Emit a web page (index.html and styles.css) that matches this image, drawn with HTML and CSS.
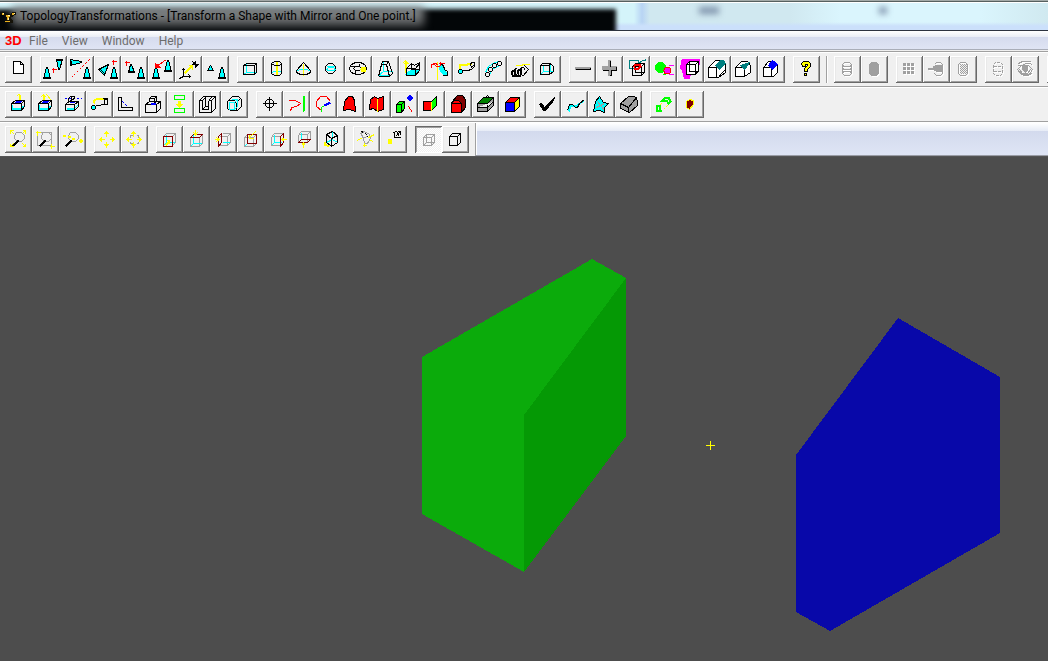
FILE: index.html
```html
<!DOCTYPE html>
<html lang="en">
<head>
<meta charset="utf-8">
<title>TopologyTransformations</title>
<link rel="stylesheet" href="styles.css">
</head>
<body>
<div class="window">
<header class="title-bar">
  <div class="glass" aria-hidden="true"><i class="dark"></i><i class="glow"></i><i class="smudge one"></i><i class="smudge two"></i></div>
  <svg class="app-icon" viewBox="0 0 16 16"><path d="M1 4h4l1 2h5l1-2h4v3h-2l-1 2h-2v2l2 2v2h-8v-2l2-2v-2h-2l-2-2h-3z" fill="#151208"/><path d="M2 5h2v2h-2zM12 5h2v2h-2zM6 7h4v2h-4zM7 9h2v3h-2zM5 13h5v1h-5z" fill="#e8b020"/><path d="M3 5h1v1h-1zM8 7h2v1h-2zM8 10h1v2h-1zM14 5h1v1h-1z" fill="#fff6b0"/></svg>
  <h1>TopologyTransformations - [Transform a Shape with Mirror and One point.]</h1>
</header>
<nav class="menu-bar">
  <span class="logo">3D</span>
  <button>File</button><button>View</button><button>Window</button><button>Help</button>
</nav>
<div class="tool-row">
  <div class="group">
    <button class="tool" aria-label="New"><svg viewBox="-.5 -.5 27 27"><path class="k fw" d="M8 5h7l3 3v9h-10zM15 5v3h3"/></svg></button>
  </div>
  <div class="group">
    <button class="tool" aria-label="Mirror about point"><svg viewBox="-.5 -.5 27 27"><path class="k fc" d="M6 11h1l3 11h-7zM16 3h6l-3 10h-1zM3 21h7M16 4h6"/><path class="r" d="M11 13h5M13 11v5"/></svg></button>
    <button class="tool" aria-label="Mirror about axis"><svg viewBox="-.5 -.5 27 27"><path class="k fc" d="M3 3v6l11-3v-1zM4 4v5M19 11h1l3 11h-7zM16 21h7"/><path class="r dot" d="M22 3L4 21"/></svg></button>
    <button class="tool" aria-label="Rotate"><svg viewBox="-.5 -.5 27 27"><path class="k fc" d="M14 8l-10 5 6 6zM19 11h1l3 11h-7zM5 12l6 6M16 21h7"/><path class="r" d="M17 5h5M19 3v5"/></svg></button>
    <button class="tool" aria-label="Scale"><svg viewBox="-.5 -.5 27 27"><path class="k fc" d="M9 8h1l3 8h-6zM19 11h1l3 11h-7zM7 15h6M16 21h7"/><path class="r" d="M3 6h5M5 4v5"/></svg></button>
    <button class="tool" aria-label="Translate"><svg viewBox="-.5 -.5 27 27"><path class="k fc" d="M7 11h1l3 11h-7zM19 4h1l3 11h-7zM4 21h7M16 14h7"/><path class="r fr" d="M18 3L8 10M7 7v4h5z"/></svg></button>
    <button class="tool" aria-label="Displacement"><svg viewBox="-.5 -.5 27 27"><path class="k" d="M8 12v8h7M8 20l-4 2M13 18l2 2-2 2M6 14l2-2 2 2M16 8h7M20 4v7M17 5l5 5M17 8l3-3M20 11l3-3"/><path class="y thick" d="M9 17l8-8"/><path class="y" d="M13 9h4v4"/></svg></button>
    <button class="tool" aria-label="Deform"><svg viewBox="-.5 -.5 27 27"><path class="k fc" d="M8 9l3 5h-6zM19 11h1l3 11h-7zM16 21h7"/></svg></button>
  </div>
  <div class="group">
    <button class="tool" aria-label="Box"><svg viewBox="-.5 -.5 27 27"><path class="c" d="M9 7v9h9M9 16l-3 2"/><path class="k" d="M6 9h11v9h-11zM6 9l3-2h10l-2 2M19 7v9l-2 2"/></svg></button>
    <button class="tool" aria-label="Cylinder"><svg viewBox="-.5 -.5 27 27"><path class="c" d="M7 16l3-1h5l3 1"/><path class="y" d="M12 5v14M13 5v14"/><path class="k" d="M7 7l3-2h5l2 2-2 2h-5l-3-2v10l3 2h5l2-2v-10"/></svg></button>
    <button class="tool" aria-label="Cone"><svg viewBox="-.5 -.5 27 27"><path class="c" d="M5 15l3-2h8l3 2"/><path class="y" d="M12 7v12"/><path class="k" d="M12 6l-7 8v2l4 2h6l4-2v-2z"/></svg></button>
    <button class="tool" aria-label="Sphere"><svg viewBox="-.5 -.5 27 27"><path class="k" d="M10 7h4l3 3v4l-3 3h-4l-3-3v-4z"/><path class="c" d="M8 13l2-2h5l2 2-2 1h-5zM8 10h8"/></svg></button>
    <button class="tool" aria-label="Torus"><svg viewBox="-.5 -.5 27 27"><ellipse class="k" cx="12.5" cy="12" rx="8.500" ry="6"/><path class="k" d="M8 12l2-2h4l2 2-2 2h-4zM5 10h4M10 14v4M14 7v3"/><circle class="fy" cx="18" cy="13" r="3"/></svg></button>
    <button class="tool" aria-label="Wedge"><svg viewBox="-.5 -.5 27 27"><path class="c" d="M11 5v10l-5 4M11 15h9M6 19h11"/><path class="k" d="M10 5h6l4 12-3 3-3-12h-5l-3 12M6 20h11M9 8l1-3M16 5l-2 3"/></svg></button>
    <button class="tool" aria-label="Prism"><svg viewBox="-.5 -.5 27 27"><path class="c fc" d="M6 18l5-4h9l-4 5h-9z"/><path class="y thick" d="M6 4v12"/><path class="y" d="M3 7l3-3 3 3M4 7h5"/><path class="k" d="M7 12h9v7h-9zM7 12l5-5M12 7v6h8M12 7l3 2 5-3v8l-4 5M16 12l4-5"/></svg></button>
    <button class="tool" aria-label="Revolve"><svg viewBox="-.5 -.5 27 27"><path class="k" d="M15 8l2 1 1 4 3 2v4h-5"/><path class="c fc" d="M13 9h2l2 4 3 3v2h-3l-4-5z"/><path class="y" d="M11 5v18"/><path class="r" d="M5 11v-3h3l2 2h3l2-3h3M6 8l2-1h2l1 2M13 8l1-2"/></svg></button>
    <button class="tool" aria-label="Pipe"><svg viewBox="-.5 -.5 27 27"><path class="y thick" d="M6 12v-3l3-1h5l4-1"/><path class="k" d="M9 14h5l4-1 3-3v-4h-3l-1 2 1 3 2-2"/><circle class="k fc" cx="7" cy="15" r="2"/></svg></button>
    <button class="tool" aria-label="Through sections"><svg viewBox="-.5 -.5 27 27"><path class="c" d="M5 16l3-6 6-4 5-1M9 18l4-6 7-3"/><circle class="k" cx="7" cy="18" r="2"/><circle class="k" cx="10" cy="13" r="2"/><circle class="k" cx="14" cy="9" r="2"/><circle class="k" cx="19" cy="7" r="2"/></svg></button>
    <button class="tool" aria-label="Evolved"><svg viewBox="-.5 -.5 27 27"><path class="y" d="M8 9h6l2-1h6"/><path class="k thick" d="M4 19l1-4 3-2-1 6 3-1 1-4 3-2-1 7h-9"/><path class="k" d="M14 19h2l5-6-4-4M13 11h3l2 3"/></svg></button>
    <button class="tool" aria-label="Draft"><svg viewBox="-.5 -.5 27 27"><path class="c" d="M9 8v7h9M9 15l-3 3M16 8v7"/><path class="k" d="M6 9h9v9h-9zM6 9l2-2h8l3 3v5l-4 3M15 9l1-2"/></svg></button>
  </div>
  <div class="group">
    <button class="tool" aria-label="Cut"><svg viewBox="-.5 -.5 27 27"><path class="n fn" d="M6 11h15v2h-15z"/><path class="k" d="M6 13h15v-2"/></svg></button>
    <button class="tool" aria-label="Fuse"><svg viewBox="-.5 -.5 27 27"><path class="n fn" d="M12 4h2v6h6v3h-6v6h-2v-6h-6v-3h6z"/><path class="k" d="M14 4v6M20 10v4h-5v5h-2M6 14h6"/></svg></button>
    <button class="tool" aria-label="Section"><svg viewBox="-.5 -.5 27 27"><path class="t" d="M6 4h9v8h-9zM15 7l4-3h3v-2"/><path class="k" d="M9 10h9v9h-9zM9 10l3-3h9v9l-3 3M18 10l3-3M12 8v8h8"/><path class="r thick" d="M10 11l2-3h4l1 2-2 2h-5"/></svg></button>
    <button class="tool" aria-label="Common"><svg viewBox="-.5 -.5 27 27"><circle class="g fg" cx="10" cy="11" r="5"/><path class="m" d="M18 9h5M18 18h5M19 10v7"/><circle class="r fm" cx="17" cy="14" r="3.500"/><path class="g" d="M12 18h3"/></svg></button>
    <button class="tool" aria-label="Common section"><svg viewBox="-.5 -.5 27 27"><path class="m fm" d="M5 3h17v4l-4 9-5 2-1 4h-5l-2-8-2-2 1-7z"/><path class="fw k" d="M9 8l3-3h9v9l-3 4h-9z"/><path class="k" d="M9 8h9v10M18 8l3-3M12 5v10h9"/></svg></button>
    <button class="tool" aria-label="Fillet"><svg viewBox="-.5 -.5 27 27"><path class="fw k" d="M4 11l7-7h7l3 4v8l-7 5h-10z"/><path class="k" d="M4 11h8v10M14 20l7-7"/><path class="ft t" d="M11 9l5-5h3l2 3-6 6-3-3z"/></svg></button>
    <button class="tool" aria-label="Variable fillet"><svg viewBox="-.5 -.5 27 27"><path class="fw k" d="M4 11l6-6h6l3 4v7l-6 4h-9z"/><path class="k" d="M4 11h9v9"/><path class="ft t" d="M9 9l9-3-5 7z"/></svg></button>
    <button class="tool" aria-label="Chamfer"><svg viewBox="-.5 -.5 27 27"><path class="fw k" d="M5 11l5-6h6l3 4v7l-4 4h-10z"/><path class="k" d="M5 11h8v9"/><path class="fb b" d="M10 9l4-5 5 4-5 5z"/></svg></button>
  </div>
  <div class="group">
    <button class="tool" aria-label="Help"><svg viewBox="-.5 -.5 27 27"><path class="k fy" d="M8 7l2-2h5l2 2v3l-3 3v2h-3v-3l3-3v-1h-2v2h-3zM11 17h2v2h-2z"/></svg></button>
  </div>
  <div class="group split">
    <button class="tool off" disabled aria-label="Wireframe"><svg viewBox="-.5 -.5 27 27"><path class="n" d="M8 8l2-2h5l2 2v9l-2 2h-5l-2-2zM8 9l2 1h5l2-1M8 12l2 1h5l2-1M8 16l2-1h5l2 1"/></svg></button>
    <button class="tool off" disabled aria-label="Shading"><svg viewBox="-.5 -.5 27 27"><path class="n fn" d="M8 8l2-2h5l2 2v9l-2 2h-5l-2-2z"/></svg></button>
  </div>
  <div class="group">
    <button class="tool off" disabled aria-label="Color"><svg viewBox="0 0 27 27"><path class="fn" d="M7 7h3v3h-3zM11 7h3v3h-3zM15 7h3v3h-3zM7 11h3v3h-3zM11 11h3v3h-3zM15 11h3v3h-3zM7 15h3v3h-3zM11 15h3v3h-3zM15 15h3v3h-3z"/></svg></button>
    <button class="tool off" disabled aria-label="Material"><svg viewBox="-.5 -.5 27 27"><path class="n fn" d="M5 12h5v1h-5zM10 10l4-1h5v6h-5l-4-2z"/><path class="n" d="M11 8l2-2h4l2 2v9l-2 2h-4l-2-2"/></svg></button>
    <button class="tool off" disabled aria-label="Transparency"><svg viewBox="-.5 -.5 27 27"><path class="n" d="M8 8l2-2h5l2 2v9l-2 2h-5l-2-2z"/><path class="n checks" d="M9 8h8M10 9h7M9 10h8M10 11h7M9 12h8M10 13h7M9 14h8M10 15h7M9 16h8M10 17h7"/></svg></button>
  </div>
  <div class="group">
    <button class="tool off" disabled aria-label="Hidden lines"><svg viewBox="-.5 -.5 27 27"><path class="n dash" d="M8 8l2-2h5l2 2v9l-2 2h-5l-2-2zM8 10h9M8 15h9"/></svg></button>
    <button class="tool off" disabled aria-label="Erase"><svg viewBox="-.5 -.5 27 27"><path class="n" d="M6 7l4-2h8M5 9h5l3-2h5l2 2M5 13l4-4h7l4 4-3 5h-8zM7 16l4 3h5l4-3M7 13l3 4h5l3-4"/><path class="n fn" d="M10 10h5v4l-2 2-3-3z"/></svg></button>
  </div>
  <div class="group"><button class="tool" aria-label="More"></button></div>
</div>
<div class="tool-row">
  <div class="group">
    <button class="tool" aria-label="Extrude boss"><svg viewBox="-.5 -.5 27 27"><path class="y thick" d="M14 3v6"/><path class="y" d="M11 5l2-2h1l2 2"/><path class="c" d="M7 17h8l4-3M7 13v5M7 18h8"/><path class="k" d="M6 12l4-3h9l-3 3v7h-10zM16 12h-10M19 9v6l-3 4"/><path class="b fb" d="M11 10h5l-1 1h-5z"/></svg></button>
    <button class="tool" aria-label="Draft prism"><svg viewBox="-.5 -.5 27 27"><path class="y thick" d="M11 3v6"/><path class="y" d="M8 6l3-3 3 3M14 3l5 6"/><path class="c" d="M7 17h8l4-3M7 13v5M7 18h8"/><path class="k" d="M6 12l4-3h9l-3 3v7h-10zM16 12h-10M19 9v6l-3 4"/><path class="b fb" d="M11 10h5l-1 1h-5z"/></svg></button>
    <button class="tool" aria-label="Revolved boss"><svg viewBox="-.5 -.5 27 27"><path class="b dot" d="M5 7h17"/><path class="c" d="M7 17h8l3-3M7 18h8"/><path class="k" d="M6 13l3-3h10l-4 3v6h-9zM15 13h-9M19 10v5l-4 4M9 11v-4l2-2h4v2l-4 2M12 5v3"/><path class="b" d="M10 11h5"/></svg></button>
    <button class="tool" aria-label="Feature pipe"><svg viewBox="-.5 -.5 27 27"><path class="y thick" d="M7 12l1-3 3-2h6"/><path class="k" d="M9 14h3l5-1h4v-5h-3v4M16 7h5"/><circle class="k fc" cx="7" cy="16" r="2"/></svg></button>
    <button class="tool" aria-label="Linear rib"><svg viewBox="-.5 -.5 27 27"><path class="k" d="M5 6h3v10h11v3h-14z"/><path class="b dot" d="M9 10l6 6"/></svg></button>
    <button class="tool" aria-label="Gluing"><svg viewBox="-.5 -.5 27 27"><path class="k" d="M5 13l4-3h11l-4 3v8h-11zM16 13h-11M20 10v7l-4 4M9 10v-3l2-2h5v4l-2 3M9 7h5l2-2M14 7v4"/><path class="b thick" d="M10 12h5"/></svg></button>
    <button class="tool" aria-label="Split shape"><svg viewBox="-.5 -.5 27 27"><path class="g" d="M7 4h10v4h-10zM7 17h10v4h-10z"/><path class="y fy" d="M11 10h2v3h2l-3 3-3-3h2z"/></svg></button>
    <button class="tool" aria-label="Thick solid"><svg viewBox="-.5 -.5 27 27"><path class="k" d="M5 9l4-4h12v12l-4 4h-12zM5 9h3M14 9h3v12M17 9l4-4M8 9v9h6v-9M8 9l3-3M11 6v9l-3 3M14 9l3-3M11 15h3"/></svg></button>
    <button class="tool" aria-label="Offset shape"><svg viewBox="-.5 -.5 27 27"><path class="k" d="M7 9l4-4h6l3 3v7l-4 4h-7l-3-2v-7zM7 9h6l2 3v7M15 11l4-4"/><path class="c" d="M8 11h5v7h-5zM10 8h6v7l-3 3M13 11l3-3"/></svg></button>
  </div>
  <div class="group">
    <button class="tool" aria-label="Point"><svg viewBox="-.5 -.5 27 27"><path class="k" d="M6 12h14M13 5v14M11 8h4l2 2v4l-2 2h-4l-2-2v-4z"/></svg></button>
    <button class="tool" aria-label="Curve analysis"><svg viewBox="-.5 -.5 27 27"><path class="r" d="M5 9h7l5 3-4 3-5 1-1 4"/><path class="g thick" d="M20 4v8l1 8"/></svg></button>
    <button class="tool" aria-label="Arc"><svg viewBox="-.5 -.5 27 27"><path class="r" d="M11 19l-5-4v-5l4-5h6l4 5"/><path class="g" d="M11 20v-4l3-2"/><path class="b thick" d="M14 14l6-3"/></svg></button>
    <button class="tool" aria-label="Surface"><svg viewBox="-.5 -.5 27 27"><path class="k fr" d="M6 19l1-9 4-5h4l2 4 1 11-6-2z"/></svg></button>
    <button class="tool" aria-label="Split surface"><svg viewBox="-.5 -.5 27 27"><path class="k fr" d="M5 18l1-10 4-3 3 2 6-2v13l-6 2-4-3z"/><path class="y" d="M13 7v13"/></svg></button>
    <button class="tool" aria-label="Solid projection"><svg viewBox="-.5 -.5 27 27"><path class="k fg" d="M5 13l3-3h5v7l-3 4h-5zM5 13h5v8M10 13l3-3"/><path class="b fb" d="M18 4h1l2 2v1l-2 2h-1l-2-2v-1z"/><path class="r" d="M17 15l4 6"/></svg></button>
    <button class="tool" aria-label="Faces"><svg viewBox="-.5 -.5 27 27"><path class="k fr" d="M5 10h8v9h-8z"/><path class="k fg" d="M13 10l5-5v9l-5 5z"/><path class="y" d="M13 10v9"/></svg></button>
    <button class="tool" aria-label="Domed block"><svg viewBox="-.5 -.5 27 27"><path class="k fd" d="M6 11l6-7h5l3 4v8l-4 5h-10z"/><path class="k fr" d="M6 12l3-3h4l3 3v9h-10zM6 12h10"/></svg></button>
    <button class="tool" aria-label="Cap block"><svg viewBox="-.5 -.5 27 27"><path class="k fn" d="M5 13l7-6h9v7l-6 6h-10zM5 16h10l6-6M15 13v7"/><path class="k fh" d="M5 12l6-6h10l-6 6z"/><path class="k" d="M13 6l2-2 2 3"/></svg></button>
    <button class="tool" aria-label="Colored cube"><svg viewBox="-.5 -.5 27 27"><path class="k fr" d="M6 11l5-5h9l-5 5z"/><path class="k fb" d="M6 11h9v9h-9z"/><path class="k fy" d="M15 11l5-5v9l-5 5z"/></svg></button>
  </div>
  <div class="group">
    <button class="tool" aria-label="Check"><svg viewBox="-.5 -.5 27 27"><path class="k fk" d="M5 13l2-1 3 4 10-10-1 3-8 10h-2z"/></svg></button>
    <button class="tool" aria-label="Fit curve"><svg viewBox="-.5 -.5 27 27"><path class="c thick" d="M7 20l2-6h7l6-5"/><path class="k" d="M6 19l2-6h3l3 3h2l2-4 5-4"/></svg></button>
    <button class="tool" aria-label="Filled surface"><svg viewBox="-.5 -.5 27 27"><path class="k fc" d="M11 5l4 6 5 1-4 4v5l-5-2-6 1 2-10z"/><path class="n" d="M9 10l7 9M8 16l8-4"/></svg></button>
    <button class="tool" aria-label="Sewing"><svg viewBox="-.5 -.5 27 27"><path class="k fn" d="M5 12l8-7h6l3 4v5l-8 7-9-4zM5 12l8 4v5M13 16l8-10"/></svg></button>
  </div>
  <div class="group">
    <button class="tool" aria-label="Link shapes"><svg viewBox="-.5 -.5 27 27"><path class="g thick" d="M6 14h3l1 5h-4zM12 9l3-3h3l2 4-2 2-2-3z"/><path class="y dot" d="M10 13l4-3M13 18l4-4"/></svg></button>
    <button class="tool" aria-label="Patch"><svg viewBox="-.5 -.5 27 27"><path class="y fd" d="M9 10l3-2 4 1v4l-4 5-3-2z"/></svg></button>
  </div>
</div>
<div class="tool-row view-row">
  <div class="group">
    <button class="tool" aria-label="Fit all"><svg viewBox="-.5 -.5 27 27"><path class="n" d="M11 6h5l3 3v3l-3 3h-4l-3-3v-3z"/><path class="k thick" d="M13 14l-6 6"/><path class="y" d="M5 7V4h3M5 4l4 4M17 4h3v3M20 4l-3 3M5 17v3h3M5 20l3-3M17 17l4 4M20 17v3h-3"/></svg></button>
    <button class="tool" aria-label="Zoom window"><svg viewBox="-.5 -.5 27 27"><path class="n" d="M5 6h14v13h-14zM11 6h5l3 3v3l-3 3h-4l-3-3v-3z"/><path class="k thick" d="M13 14l-6 6"/><path class="y" d="M3 6h5M5 4v5M17 20h5M19 17v5"/></svg></button>
    <button class="tool" aria-label="Zoom"><svg viewBox="-.5 -.5 27 27"><path class="n" d="M11 6h5l3 3v3l-3 3h-4l-3-3v-3z"/><path class="k thick" d="M12 14l-6 6"/><path class="y thick" d="M3 9h3M8 10h3M12 12h3M19 14h4M21 12v4"/></svg></button>
  </div>
  <div class="group">
    <button class="tool" aria-label="Pan"><svg viewBox="-.5 -.5 27 27"><path class="y" d="M12 5v5M12 15v6M5 13h5M15 13h5"/><path class="y fy" d="M12 5l2 2h-4zM12 20l2-2h-4zM5 13l2-2v4zM20 13l-2-2v4z"/></svg></button>
    <button class="tool" aria-label="Global pan"><svg viewBox="-.5 -.5 27 27"><path class="n" d="M9 11v-2h2M15 9h2v2M17 15v2h-2M11 17h-2v-2"/><path class="y" d="M12 5v5M12 15v6M5 13h5M15 13h5"/><path class="y fy" d="M12 5l2 2h-4zM12 20l2-2h-4zM5 13l2-2v4zM20 13l-2-2v4z"/></svg></button>
  </div>
  <div class="group">
    <button class="tool" aria-label="Front"><svg viewBox="-.5 -.5 27 27"><path class="n" d="M7 10l3-3h9v9l-3 3M16 10l3-3"/><path class="c" d="M10 8v8h8M10 16l-3 3"/><path class="d" d="M7 10h9v10h-9z"/><path class="y thick" d="M9 19l4-4"/><path class="y" d="M10 14h3v3"/></svg></button>
    <button class="tool" aria-label="Top"><svg viewBox="-.5 -.5 27 27"><path class="n" d="M7 11v9h9v-9M19 8v9l-3 3"/><path class="c" d="M10 8v9h8M10 17l-3 3"/><path class="d" d="M7 11l3-3h9l-3 3z"/><path class="y" d="M12 3v6M10 6l2 3 2-3"/></svg></button>
    <button class="tool" aria-label="Left"><svg viewBox="-.5 -.5 27 27"><path class="n" d="M9 10h8v9h-8M12 7h8v9l-3 3M17 10l3-3"/><path class="c" d="M12 16h7"/><path class="d" d="M8 10l3-3v9l-3 4z"/><path class="y" d="M4 13h5M6 11l3 2-3 2"/></svg></button>
    <button class="tool" aria-label="Back"><svg viewBox="-.5 -.5 27 27"><path class="n" d="M7 11h9v9h-9zM7 11l3-3M16 11l3-3M16 20l3-3"/><path class="c" d="M7 20l3-3"/><path class="d" d="M10 8h9v9h-9z"/><path class="y" d="M18 5l-6 6M12 8v4h4"/></svg></button>
    <button class="tool" aria-label="Right"><svg viewBox="-.5 -.5 27 27"><path class="n" d="M7 10h9M7 10v9h9M7 10l3-3h9"/><path class="c" d="M10 8v8h7M10 16l-3 3"/><path class="d" d="M16 10l3-3v9l-3 4z"/><path class="y" d="M17 13h5M20 11l-3 2 3 2"/></svg></button>
    <button class="tool" aria-label="Bottom"><svg viewBox="-.5 -.5 27 27"><path class="n" d="M7 8h9v8M7 8v8M7 8l3-3h9v8M16 8l3-3"/><path class="c" d="M10 6v7"/><path class="d" d="M7 16l3-3h9l-3 3z"/><path class="y" d="M12 21v-5M10 19l2-3 2 3"/></svg></button>
    <button class="tool" aria-label="Axonometric"><svg viewBox="-.5 -.5 27 27"><path class="c" d="M14 5v8l-6 3M14 13l5 3"/><path class="k" d="M8 8l6-3 5 4v7l-6 4-5-4zM8 8l5 4v8M13 12l6-3"/><path class="y thick" d="M6 15v3l5 2"/></svg></button>
  </div>
  <div class="group">
    <button class="tool" aria-label="Rotate view"><svg viewBox="-.5 -.5 27 27"><path class="n" d="M7 7l4-2 5 3 1 4-3 5h-3l-1-5zM7 7l3 4 5-1"/><path class="k dot" d="M8 5l4 2 4 6"/><path class="y" d="M4 14l5-3M15 11l6-3M17 14l3 1M11 16v4M9 19h4"/></svg></button>
    <button class="tool" aria-label="Reset view"><svg viewBox="-.5 -.5 27 27"><path class="y thick" d="M8 13h2v3h-2z"/><path class="k" d="M14 6v5h6M13 6l3-1 3 5M15 10l5-5M17 5h3v3"/></svg></button>
  </div>
  <div class="group">
    <button class="tool pressed" aria-pressed="true" aria-label="Hidden off"><svg viewBox="-.5 -.5 27 27"><path class="n" d="M8 11h8v8h-8zM8 11l3-3h8v8l-3 3M16 11l3-3M11 8v8h8M11 16l-3 3"/></svg></button>
    <button class="tool" aria-label="Hidden on"><svg viewBox="-.5 -.5 27 27"><path class="k" d="M7 10h8v9h-8zM7 10l3-3h8v9l-3 3M15 10l3-3"/></svg></button>
  </div>
  <div class="filler"></div>
</div>
<main class="viewport">
  <svg viewBox="0 0 1048 504" role="img" aria-label="Mirrored shapes">
    <path fill="#0bab0b" d="M422 200L592 102L626 121V279L524 415L422 357z"/>
    <path fill="#059905" d="M524 258L626 121V279L524 415z"/>
    <path fill="#0808a9" d="M796 298L898 161L1000 220V376L830 474L796 455z"/>
    <path fill="#ff0" d="M706 288h9v1h-9zM710 284h1v9h-1z"/>
  </svg>
</main>
</div>
</body>
</html>
```
FILE: styles.css
```css
* { box-sizing: border-box; }
body { margin: 0; font-family: Roboto, "Noto Sans", sans-serif; font-size: 12px; background: #4d4d4d; }
button { font: inherit; border: 0; padding: 0; background: none; }
.window { display: flex; flex-direction: column; height: 100vh; overflow: hidden; }

.title-bar { position: relative; display: flex; align-items: center; gap: 4px; flex: none; height: 31px; padding-top: 2px; border-bottom: 1px solid #2c3340; overflow: hidden; }
.title-bar h1 { position: relative; margin: 0; font-size: 12px; font-weight: 400; line-height: 16px; white-space: nowrap; color: #000; }
.app-icon { position: relative; width: 16px; height: 16px; shape-rendering: crispEdges; }
.glass { position: absolute; inset: 0; background: linear-gradient(#a3aaa8 0 1px, #56605f 1px 2px, #fff 2px 3px, transparent 3px), linear-gradient(transparent 22px, #cbe0fb 26px), linear-gradient(90deg, #d4f4fa 0 634px, #b8d4f4 642px, #d0e8f0 650px, #d0e8f0 790px, #daf5fd 840px, #daf5fd 980px, #d0e9f0); }
.glass i { position: absolute; }
.dark { left: -12px; top: 9px; width: 628px; height: 36px; background: #030608; filter: blur(2px); }
.glow { left: 12px; top: 6px; width: 412px; height: 20px; background: linear-gradient(#a0a8ac, #747778 8px, #5c5e60); filter: blur(4px); }
.smudge { top: 7px; height: 7px; background: #7f93ac; filter: blur(3px); }
.one { left: 699px; width: 20px; }
.two { left: 879px; width: 8px; }

.menu-bar { display: flex; align-items: center; flex: none; height: 20px; padding-left: 5px; border-bottom: 1px solid #f0f0f0; background: linear-gradient(#fff, #e9edf6 6px, #d5dbee 6px, #dfe4f4 18px, #a9adb8 18px); }
.menu-bar button { padding: 0 7px; line-height: 18px; color: #6d6d6d; }
.logo { width: 17px; font: 700 13px/18px "Liberation Sans", sans-serif; color: #f00; }

.tool-row { display: flex; gap: 8px; flex: none; height: 35px; padding: 4px 5px 3px; border-top: 1px solid #a0a0a0; box-shadow: inset 0 1px #fff; background: #f0f0f0; overflow: hidden; }
.group { display: flex; flex: none; }
.split { margin-left: -2px; padding-left: 8px; background: linear-gradient(90deg, #a0a0a0 1px, #fff 1px 2px, transparent 2px); }
.tool { width: 27px; height: 27px; background: #f0f0f0; box-shadow: inset -1px -1px #696969, inset 1px 1px #fff, inset -2px -2px #a0a0a0, inset 2px 2px #e9e9e9; }
.tool svg { display: block; width: 27px; height: 27px; fill: none; shape-rendering: crispEdges; }
.off svg { filter: drop-shadow(1px 1px 0 #fff); }
.pressed { background: repeating-conic-gradient(#fff 0 25%, #f0f0f0 0 50%) 0 0 / 2px 2px; box-shadow: inset 1px 1px #696969, inset -1px -1px #fff, inset 2px 2px #a0a0a0; }
.view-row { height: 36px; padding-right: 0; padding-bottom: 0; border-bottom: 1px solid #555; }
.filler { flex: 1; margin: -3px 0 0 -2px; border-left: 1px solid #a0a0a0; border-bottom: 1px solid #9a9da6; box-shadow: inset 1px 0 #fff; background: linear-gradient(#fff, #e6ebf6 8px, #d3daed 8px, #dfe5f5); }

.k { stroke: #000; } .c { stroke: #0ff; } .r { stroke: #f00; } .y { stroke: #ff0; }
.b { stroke: #00f; } .g { stroke: #0f0; } .n { stroke: #a0a0a0; } .m { stroke: #f0f; }
.t { stroke: #008080; } .d { stroke: #800000; }
.fk { fill: #000; } .fw { fill: #fff; } .fc { fill: #0ff; } .fr { fill: #f00; } .fy { fill: #ff0; }
.fb { fill: #00f; } .fg { fill: #0f0; } .fn { fill: #a0a0a0; } .fm { fill: #f0f; }
.ft { fill: #008080; } .fd { fill: #800000; } .fh { fill: #008000; }
.thick { stroke-width: 2; }
.dot { stroke-dasharray: 2 2; }
.dash { stroke-dasharray: 3 1; }
.checks { stroke-dasharray: 1 1; }

.viewport { flex: 1; min-height: 0; background: #4d4d4d; }
.viewport svg { display: block; width: 100%; height: 100%; shape-rendering: crispEdges; }
```
